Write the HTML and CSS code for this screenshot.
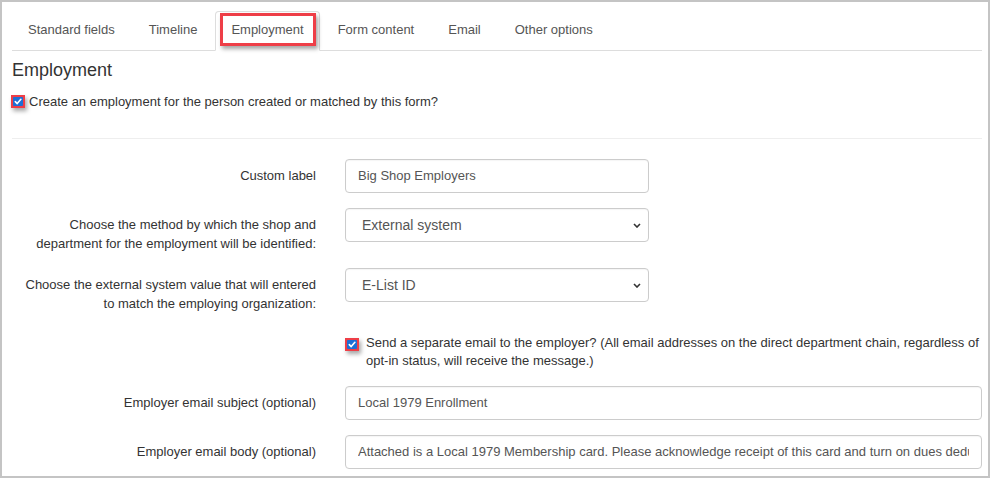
FILE: index.html
```html
<!DOCTYPE html>
<html lang="en">
<head>
<meta charset="utf-8">
<title>Employment</title>
<link rel="stylesheet" href="styles.css">
</head>
<body>
<div class="panel">
  <ul class="tabs">
    <li class="tab"><a>Standard fields</a></li>
    <li class="tab"><a>Timeline</a></li>
    <li class="tab active"><a>Employment</a><span class="tab-highlight"></span></li>
    <li class="tab"><a>Form content</a></li>
    <li class="tab"><a>Email</a></li>
    <li class="tab"><a>Other options</a></li>
  </ul>

  <h3 class="title">Employment</h3>

  <label class="check-row top-check">
    <span class="cb"><svg viewBox="0 0 10 10" width="10" height="10"><path d="M2 5.2 L4.1 7.3 L8.2 2.6" fill="none" stroke="#fff" stroke-width="1.8" stroke-linecap="round" stroke-linejoin="round"/></svg></span>
    <span>Create an employment for the person created or matched by this form?</span>
  </label>

  <hr class="divider">

  <div class="form-row">
    <div class="form-label">Custom label</div>
    <div class="form-field">
      <input class="control narrow" type="text" value="Big Shop Employers">
    </div>
  </div>

  <div class="form-row">
    <div class="form-label">Choose the method by which the shop and department for the employment will be identified:</div>
    <div class="form-field">
      <div class="select-wrap narrow">
        <select class="control select"><option>External system</option></select>
        <svg class="chevron" viewBox="0 0 8 5" width="8" height="5"><path d="M1 1 L4 4 L7 1" fill="none" stroke="#333" stroke-width="1.6"/></svg>
      </div>
    </div>
  </div>

  <div class="form-row">
    <div class="form-label">Choose the external system value that will entered to match the employing organization:</div>
    <div class="form-field">
      <div class="select-wrap narrow">
        <select class="control select"><option>E-List ID</option></select>
        <svg class="chevron" viewBox="0 0 8 5" width="8" height="5"><path d="M1 1 L4 4 L7 1" fill="none" stroke="#333" stroke-width="1.6"/></svg>
      </div>
    </div>
  </div>

  <div class="form-row">
    <div class="form-label"></div>
    <div class="form-field">
      <label class="check-row field-check">
        <span class="cb"><svg viewBox="0 0 10 10" width="10" height="10"><path d="M2 5.2 L4.1 7.3 L8.2 2.6" fill="none" stroke="#fff" stroke-width="1.8" stroke-linecap="round" stroke-linejoin="round"/></svg></span>
        <span>Send a separate email to the employer? (All email addresses on the direct department chain, regardless of opt-in status, will receive the message.)</span>
      </label>
    </div>
  </div>

  <div class="form-row">
    <div class="form-label">Employer email subject (optional)</div>
    <div class="form-field">
      <input class="control" type="text" value="Local 1979 Enrollment">
    </div>
  </div>

  <div class="form-row">
    <div class="form-label">Employer email body (optional)</div>
    <div class="form-field">
      <input class="control" type="text" value="Attached is a Local 1979 Membership card. Please acknowledge receipt of this card and turn on dues deduction.">
    </div>
  </div>
</div>
</body>
</html>
```

FILE: styles.css
```css
* { box-sizing: border-box; }

html, body {
  margin: 0;
  padding: 0;
  background: #fff;
}

body {
  font-family: "Liberation Sans", Arial, sans-serif;
  font-size: 13px;
  color: #333;
}

.panel {
  width: 990px;
  height: 478px;
  border: 2px solid #c4c4c4;
  padding: 9px 6px 0 10px;
  overflow: hidden;
}

/* Tabs */
.tabs {
  display: flex;
  list-style: none;
  margin: 0;
  padding: 0;
  border-bottom: 1px solid #ddd;
}

.tab {
  position: relative;
  margin-right: 2px;
  margin-bottom: -1px;
}

.tab a {
  display: block;
  padding: 8px 15px 10px;
  line-height: 20px;
  font-size: 13px;
  color: #555;
  border: 1px solid transparent;
  border-radius: 4px 4px 0 0;
}

.tab.active a {
  background: #fff;
  border-color: #ddd #ddd transparent;
}

.tab-highlight {
  position: absolute;
  left: 5px;
  top: 2px;
  width: 96px;
  height: 33px;
  border: 3px solid #ee3e47;
  box-shadow: 2px 3px 4px rgba(0, 0, 0, 0.35);
  pointer-events: none;
}

/* Heading */
.title {
  margin: 9px 0 0;
  font-size: 18px;
  font-weight: normal;
  line-height: 20px;
  color: #333;
}

/* Checkboxes */
.check-row {
  display: flex;
  align-items: flex-start;
  line-height: 18.5px;
  font-size: 13px;
  color: #333;
}

.cb {
  flex: none;
  width: 14px;
  height: 13px;
  padding: 2px;
  background: #ee3e47;
  box-shadow: 2px 3px 4px rgba(0, 0, 0, 0.35);
  display: flex;
  align-items: center;
  justify-content: center;
}

.cb svg {
  display: block;
  width: 10px;
  height: 9px;
  background: #1c6fd6;
  border-radius: 1px;
}

.top-check {
  margin: 13px 0 0 -1px;
}

.top-check .cb {
  margin: 2px 4px 0 0;
}

.field-check {
  padding-top: 6px;
}

.field-check .cb {
  margin: 4px 7px 0 0;
}

.divider {
  margin: 26px 0 20px;
  border: 0;
  border-top: 1px solid #eee;
}

/* Form */
.form-row {
  display: grid;
  grid-template-columns: 318px 1fr;
  margin-bottom: 15px;
}

.form-label {
  text-align: right;
  padding: 7px 14px 0 0;
  line-height: 19px;
  font-size: 13px;
  color: #333;
}

.form-field {
  padding-left: 15px;
}

.control {
  display: block;
  width: 100%;
  height: 34px;
  padding: 6px 12px;
  font-family: "Liberation Sans", Arial, sans-serif;
  font-size: 13px;
  color: #555;
  background: #fff;
  border: 1px solid #ccc;
  border-radius: 4px;
  box-shadow: inset 0 1px 1px rgba(0, 0, 0, 0.04);
  outline: none;
}

.narrow {
  width: 304px;
}

.select-wrap {
  position: relative;
}

.select {
  appearance: none;
  -webkit-appearance: none;
  padding: 0 30px 0 16px;
  font-size: 14px;
}

.chevron {
  position: absolute;
  right: 8px;
  top: 15px;
  pointer-events: none;
}
```
